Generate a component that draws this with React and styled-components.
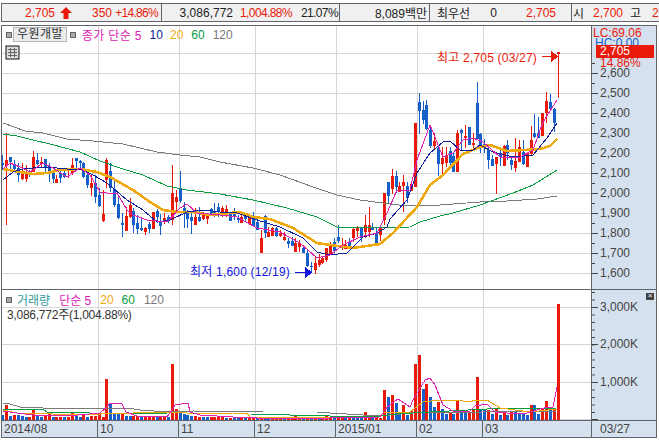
import React from "react";
import styled, { createGlobalStyle } from "styled-components";

const Red = "#ea1a0a";
const Blue = "#1560c8";
const AxisBg = "#d6e1ef";
const Line = "#606468";
const GridLine = "#d6d6d6";

// [red?, wick top, body top, body bottom, wick bottom] in page pixels
const candles = [
  [0,155,163,165,170],[1,133,160,166,225],[0,157,157,162,170],[0,160,164,169,172],[0,163,168,175,182],[1,163,172,179,180],[1,165,174,179,182],[0,170,172,175,177],
  [1,151,157,172,172],[0,153,160,164,165],[1,157,162,164,167],[0,159,159,167,172],[0,163,166,173,182],[0,170,173,179,183],[1,175,179,183,183],[0,170,173,178,183],
  [0,170,173,177,178],[1,168,168,170,178],[1,158,165,173,175],[0,158,158,161,170],[0,160,161,163,170],[0,162,163,177,178],[0,170,175,185,188],[1,175,183,188,196],
  [0,175,183,197,203],[0,188,195,206,207],[1,190,214,221,222],[1,158,160,180,188],[0,163,171,188,192],[0,179,189,205,207],[0,195,204,218,219],[0,213,223,225,237],
  [1,207,216,231,231],[1,198,205,217,218],[0,208,211,225,233],[0,215,223,229,234],[0,218,228,230,231],[1,227,228,232,235],[0,222,224,229,233],[1,212,212,229,229],
  [0,209,211,217,223],[0,214,221,226,235],[1,213,218,222,224],[0,215,217,221,223],[1,165,193,220,225],[1,190,197,202,212],[0,171,189,201,203],[0,202,208,214,228],
  [0,210,213,219,228],[0,213,217,221,234],[1,208,217,225,225],[0,207,217,221,222],[1,212,214,219,220],[1,213,214,219,224],[0,208,209,215,215],[0,203,212,216,217],
  [0,203,207,212,217],[1,206,208,216,217],[1,205,209,213,217],[0,212,213,221,221],[0,208,213,217,220],[0,215,218,220,223],[1,215,217,223,223],[0,213,214,219,221],
  [1,215,218,224,225],[0,212,217,226,226],[0,217,222,230,230],[1,230,238,253,253],[0,215,216,233,238],[1,227,232,237,237],[1,227,228,236,236],[0,227,228,236,237],
  [1,230,233,236,237],[1,232,237,240,241],[0,238,241,244,248],[0,237,241,246,246],[1,238,243,252,252],[1,240,243,247,252],[0,247,248,253,253],[0,250,253,266,267],
  [0,262,266,267,273],[1,256,263,270,274],[1,254,260,265,267],[1,257,258,263,264],[1,248,248,260,262],[1,242,246,254,255],[0,238,242,251,253],[0,225,237,241,243],
  [1,238,245,247,250],[1,240,245,249,249],[0,238,242,247,248],[1,227,229,238,242],[1,226,228,231,237],[0,227,227,238,242],[1,215,225,232,238],[1,207,225,232,237],
  [0,223,228,230,230],[0,227,233,245,245],[1,225,228,235,241],[1,193,193,220,225],[0,182,182,196,203],[1,169,176,189,194],[0,171,176,187,193],[1,182,186,192,192],
  [1,175,182,186,212],[0,182,186,198,203],[1,183,184,191,191],[1,123,123,187,187],[0,93,102,111,134],[0,101,110,120,124],[0,100,105,129,130],[0,127,130,146,148],
  [1,133,141,146,150],[0,147,148,164,176],[1,147,158,164,175],[1,147,155,163,167],[0,147,151,163,167],[0,153,156,172,172],[1,130,133,172,172],[0,129,130,133,150],
  [1,125,136,138,148],[0,127,127,145,145],[1,133,143,145,150],[0,82,103,139,139],[0,133,134,147,153],[0,139,144,147,153],[0,145,150,160,169],[0,155,159,166,166],
  [1,157,157,164,194],[0,150,153,157,166],[1,145,146,166,166],[0,140,145,153,160],[0,157,160,165,170],[1,138,161,168,172],[1,140,147,162,162],[0,140,152,164,165],
  [1,152,153,167,167],[1,126,140,154,155],[0,114,133,137,138],[0,117,133,138,138],[1,113,113,136,136],[1,92,101,113,123],[0,94,102,109,110],[0,108,109,123,132],
  [1,52,52,54,98],
];

// height in pixels, blue bars negative
const volumes = [
  -5,15,-4,5,-5,-4,-3,3,10,-5,-3,4,6,-3,3,3,-3,3,8,-4,-3,5,-3,4,4,7,3,41,-17,-6,-6,6,-4,-4,4,4,-3,3,3,4,-3,4,3,-3,56,11,-8,-6,-5,-4,4,3,-3,-3,3,3,3,
  3,-2,2,-2,-2,2,-2,2,2,-2,2,-2,-2,2,2,3,-2,2,2,4,2,-2,2,-2,2,-2,2,4,3,-2,2,2,-2,2,-2,-2,-2,8,4,-2,2,2,
  30,-23,25,-17,-7,15,-5,9,56,65,-31,36,-23,-13,18,-11,-6,8,-6,20,-8,-8,8,10,43,-11,-10,10,-6,11,-5,7,-5,9,-8,-6,-6,-5,15,-15,-6,11,19,-12,12,116,
];

const candleX = i => Math.round(2.4 + 3.855 * i);

const priceLines = [
  { color: "#7a7a7a", width: 1, pts: "3,123 25,131 43,133 67,139 93,141 123,144 157,152 180,155 200,157 220,162 253,168 280,175 313,187 337,195 360,200 383,203 407,206 440,205 480,202 507,201 537,199 557,196" },
  { color: "#0b9c40", width: 1, pts: "3,134 17,136 33,140 50,144 80,152 100,161 123,169 143,175 167,186 187,190 220,194 253,200 287,208 317,217 337,227 353,228 410,227 420,222 440,216 453,213 480,205 513,193 533,185 557,170" },
  { color: "#f0a90c", width: 2.6, pts: "3,169 20,172 33,174 47,173 60,170 80,169 97,172 110,177 133,190 150,202 163,210 177,212 193,212 210,215 240,212 253,217 270,219 293,228 317,243 337,246 353,248 380,244 393,233 405,220 417,207 430,185 443,175 463,154 480,147 490,145 507,151 540,149 550,146 557,139" },
  { color: "#10209a", width: 1, pts: "3,180 13,172 23,169 33,168 47,167 67,169 80,169 93,175 107,183 127,200 143,210 157,222 170,220 187,212 203,210 220,212 237,213 257,220 280,227 303,238 317,252 330,255 347,253 363,237 377,233 387,227 390,219 407,200 417,173 430,153 443,142 450,141 460,150 473,150 480,145 493,152 513,157 533,155 547,138 557,123" },
  { color: "#e020b4", width: 1, pts: "3,169 10,163 20,167 30,172 43,163 53,168 67,177 80,168 90,175 100,192 107,193 117,193 127,210 133,215 147,220 167,222 180,208 187,204 197,213 220,215 237,217 257,228 280,232 300,243 317,258 330,255 343,245 360,237 377,233 387,213 397,190 410,190 417,160 430,125 443,157 453,153 463,140 473,138 483,142 500,157 520,157 533,150 543,122 557,100" },
];

const volumeLines = [
  { color: "#7a7a7a", pts: "3,403 10,404 20,407 43,408 127,408 140,410 167,412 193,411 263,412 317,412 330,413 380,416 410,413 557,411" },
  { color: "#0b9c40", pts: "3,409 43,409 47,412 87,412 90,413 167,414 250,414 330,416 380,416 397,414 430,412 487,409 557,408" },
  { color: "#f0a90c", pts: "3,410 17,413 50,413 53,414 100,414 107,413 133,413 140,412 173,412 200,414 233,413 247,413 250,417 300,417 330,418 380,417 383,413 410,412 423,402 440,400 458,400 468,402 477,400 487,400 500,408 530,412 557,409" },
  { color: "#e020b4", pts: "3,411 17,413 33,415 67,416 100,413 107,407 110,403 122,404 126,412 137,416 167,417 172,410 175,405 188,403 190,412 200,415 233,417 257,418 330,418 380,417 387,407 398,399 410,407 413,400 425,380 430,378 435,385 443,405 453,411 470,411 475,406 487,404 495,412 507,413 527,413 547,407 553,407 557,387" },
];

const GridV = [98, 179, 255, 336, 417, 483];

const GlobalStyle = createGlobalStyle`
  html, body {
    margin: 0;
    padding: 0;
    background: #fff;
    overflow: hidden;
  }
  body {
    font-family: "Liberation Sans", "Noto Sans CJK KR", sans-serif;
    font-size: 12px;
  }
`;

const Page = styled.div`
  width: 659px;
  height: 440px;
  padding: 3px 0 0 1px;
  box-sizing: border-box;
  overflow: hidden;
`;

const Header = styled.div`
  display: flex;
  width: 670px;
  height: 19px;
  box-sizing: border-box;
  border: 1px solid ${Line};
  background: #f0f0f0;
  margin-bottom: 3px;
`;

const Cell = styled.div`
  display: flex;
  align-items: center;
  flex: 0 0 ${p => p.$w}px;
  box-sizing: border-box;
  overflow: hidden;
  border-right: 1px solid ${Line};
  &:last-child {
    flex: 1;
    border-right: none;
  }
`;

const Val = styled.span`
  flex: 0 0 ${p => p.$w}px;
  margin-left: ${p => p.$ml || 0}px;
  text-align: ${p => p.$left ? "left" : "right"};
  white-space: nowrap;
  color: ${p => p.$c || "#222"};
  letter-spacing: ${p => p.$ls || 0}px;
`;

const UpArrow = styled.svg`
  flex: 0 0 12px;
  width: 12px;
  height: 12px;
  margin-left: 5px;
`;

const Frame = styled.div`
  display: grid;
  grid-template-columns: 590px 64px;
  grid-template-rows: 264px 131px 16px;
  width: 656px;
  height: 413px;
  box-sizing: border-box;
  border: 1px solid ${Line};
`;

const ChartPanel = styled.div`
  position: relative;
  overflow: hidden;
  background: #fff;
  border-right: 1px solid ${Line};
  border-bottom: 1px solid ${Line};
`;

const Plot = styled.svg`
  display: block;
  width: 590px;
  height: 100%;
  shape-rendering: crispEdges;
`;

const Legend = styled.div`
  position: absolute;
  left: 4px;
  top: ${p => p.$top}px;
  display: flex;
  align-items: center;
  height: 15px;
  white-space: nowrap;
`;

const Knob = styled.i`
  display: block;
  width: 4px;
  height: 4px;
  background: #a8a8a8;
  border: 1px solid #666;
  margin-right: ${p => p.$mr || 0}px;
`;

const NameTag = styled.span`
  box-sizing: border-box;
  width: 54px;
  height: 15px;
  line-height: 13px;
  margin: 0 3px 0 1px;
  text-align: center;
  letter-spacing: 0.5px;
  background: #ebebeb;
  border: 1px solid #b8b8b8;
  color: #333;
`;

const Series = styled.span`
  color: ${p => p.$c};
  margin-left: ${p => p.$ml || 0}px;
  letter-spacing: ${p => p.$ls || 0}px;
`;

const GridButton = styled.svg`
  position: absolute;
  left: 3px;
  top: 19px;
  width: 15px;
  height: 15px;
`;

const VolumeNote = styled.div`
  position: absolute;
  left: 5px;
  top: 15px;
  color: #333;
  letter-spacing: -0.25px;
  white-space: nowrap;
`;

const Marker = styled.span`
  position: absolute;
  left: ${p => p.$x}px;
  top: ${p => p.$y}px;
  color: ${p => p.$c};
  letter-spacing: 0.2px;
  white-space: nowrap;
`;

const Axis = styled.div`
  position: relative;
  overflow: hidden;
  background-color: ${AxisBg};
  background-image: ${p => p.$minor ? "linear-gradient(#444 1px, transparent 1px)" : "none"};
  background-size: 3px 7.5px;
  background-position: 0 2px;
  background-repeat: repeat-y;
  color: #444;
  border-bottom: 1px solid ${Line};
  padding-top: ${p => p.$pad || 0}px;
  box-sizing: border-box;
`;

const AxisRow = styled.div`
  position: relative;
  display: flex;
  align-items: center;
  height: ${p => p.$h}px;
  margin-top: ${p => p.$mt || 0}px;
  padding-left: 8px;
  &::before {
    content: "";
    position: absolute;
    left: 0;
    top: 50%;
    width: 6px;
    height: 1px;
    background: #444;
  }
  &::after {
    content: "";
    display: ${p => p.$noMinor ? "none" : "block"};
    position: absolute;
    left: 0;
    top: 0;
    width: 3px;
    height: 1px;
    background: #444;
  }
`;

const PriceFlag = styled.div`
  position: absolute;
  left: 4px;
  right: 2px;
  top: 19px;
  height: 13px;
  line-height: 13px;
  padding-left: 4px;
  background: ${Red};
  color: #fff;
`;

const AxisNote = styled.div`
  position: absolute;
  left: ${p => p.$x}px;
  top: ${p => p.$y}px;
  color: ${p => p.$c};
  white-space: nowrap;
`;

const CloseBox = styled.div`
  position: absolute;
  top: 3px;
  right: 2px;
  width: 8px;
  height: 7px;
  line-height: 6px;
  font-size: 8px;
  text-align: center;
  background: #444;
  color: #fff;
`;

const TimeAxis = styled.div`
  display: flex;
  background: ${AxisBg};
  color: #444;
  border-right: 1px solid ${Line};
`;

const TimeCell = styled.div`
  flex: 0 0 ${p => p.$w}px;
  box-sizing: border-box;
  padding-left: 2px;
  line-height: 16px;
  border-right: 1px solid ${Line};
  &:last-child {
    border-right: none;
    flex: 1;
  }
`;

const TimeEnd = styled.div`
  background: ${AxisBg};
  color: #444;
  line-height: 16px;
  padding-left: 8px;
`;

const PriceChart = () => (
  <Plot viewBox="2 26 590 263">
    {[53, 73, 93, 113, 133, 153, 173, 193, 213, 233, 253, 273].map(y => (
      <line key={y} x1="2" x2="592" y1={y + 0.5} y2={y + 0.5} stroke={GridLine} />
    ))}
    {GridV.map(x => (
      <line key={x} x1={x + 0.5} x2={x + 0.5} y1="26" y2="290" stroke={GridLine} />
    ))}
    {candles.map(([up, wt, bt, bb, wb], i) => {
      const x = candleX(i);
      const c = up ? Red : Blue;
      return (
        <g key={i} fill={c}>
          <rect x={x} y={wt} width="1" height={wb - wt} />
          <rect x={x - 1} y={bt} width="3" height={Math.max(bb - bt, 1)} />
        </g>
      );
    })}
    {priceLines.map(l => (
      <polyline key={l.color} points={l.pts} fill="none" stroke={l.color} strokeWidth={l.width} />
    ))}
    <g fill={Red} stroke={Red}>
      <line x1="542" x2="552" y1="56.5" y2="56.5" />
      <polygon points="551,51 557,56.5 551,62" />
    </g>
    <g fill="#1414e0" stroke="#1414e0">
      <line x1="295" x2="305" y1="272.5" y2="272.5" />
      <polygon points="305,267 311,272.5 305,278" />
    </g>
  </Plot>
);

const VolumeChart = () => (
  <Plot viewBox="2 290 590 130">
    {[307, 344, 382, 419].map(y => (
      <line key={y} x1="2" x2="592" y1={y + 0.5} y2={y + 0.5} stroke={GridLine} />
    ))}
    {GridV.map(x => (
      <line key={x} x1={x + 0.5} x2={x + 0.5} y1="290" y2="420" stroke={GridLine} />
    ))}
    {volumes.map((v, i) => (
      <rect key={i} x={candleX(i) - 1} y={420 - Math.abs(v)} width="3" height={Math.abs(v)} fill={v > 0 ? Red : Blue} />
    ))}
    {volumeLines.map(l => (
      <polyline key={l.color} points={l.pts} fill="none" stroke={l.color} strokeWidth="1" />
    ))}
  </Plot>
);

export default function App() {
  return (
    <Page>
      <GlobalStyle />
      <Header>
        <Cell $w={160}>
          <Val $w={53} $c={Red}>2,705</Val>
          <UpArrow viewBox="0 0 12 12"><polygon points="6,0 12,6 8.5,6 8.5,12 3.5,12 3.5,6 0,6" fill={Red} /></UpArrow>
          <Val $w={40} $c={Red}>350</Val>
          <Val $w={46} $c={Red} $ls={-0.7}>+14.86%</Val>
        </Cell>
        <Cell $w={178}>
          <Val $w={71}>3,086,772</Val>
          <Val $w={59} $c={Red} $ls={-0.6}>1,004.88%</Val>
          <Val $w={46} $ls={-0.6}>21.07%</Val>
        </Cell>
        <Cell $w={90}>
          <Val $w={87}>8,089백만</Val>
        </Cell>
        <Cell $w={142}>
          <Val $w={36} $ml={7} $left>최우선</Val>
          <Val $w={24}>0</Val>
          <Val $w={59} $c={Red}>2,705</Val>
        </Cell>
        <Cell>
          <Val $w={12} $ml={1} $left>시</Val>
          <Val $w={38} $c={Red}>2,700</Val>
          <Val $w={12} $ml={7} $left>고</Val>
          <Val $w={30} $ml={10} $c={Red} $left>2,705</Val>
        </Cell>
      </Header>
      <Frame>
        <ChartPanel>
          <PriceChart />
          <Legend $top={1}>
            <Knob />
            <NameTag>우원개발</NameTag>
            <Knob $mr={6} />
            <Series $c="#e020b4" $ls={0.3}>종가 단순 5</Series>
            <Series $c="#10209a" $ml={8}>10</Series>
            <Series $c="#f0a90c" $ml={7}>20</Series>
            <Series $c="#0b9c40" $ml={8}>60</Series>
            <Series $c="#777" $ml={8}>120</Series>
          </Legend>
          <GridButton viewBox="0 0 15 15">
            <rect x="1" y="1" width="13" height="13" fill="#ddd" stroke="#111" />
            <path d="M3 4.5H12M3 7.5H12M3 10.5H12M5.5 3V12M9.5 3V12" stroke="#666" fill="none" />
          </GridButton>
          <Marker $x={435} $y={22} $c={Red}>최고 2,705 (03/27)</Marker>
          <Marker $x={188} $y={236} $c="#1414e0">최저 1,600 (12/19)</Marker>
        </ChartPanel>
        <Axis $pad={37}>
          {["2,600", "2,500", "2,400", "2,300", "2,200", "2,100", "2,000", "1,900", "1,800", "1,700", "1,600"].map(p => (
            <AxisRow key={p} $h={20}>{p}</AxisRow>
          ))}
          <AxisNote $x={3} $y={10} $c="#1560c8">HC:0.00</AxisNote>
          <AxisNote $x={1} $y={0} $c={Red}>LC:69.06</AxisNote>
          <PriceFlag>2,705</PriceFlag>
          <AxisNote $x={8} $y={30} $c={Red}>14.86%</AxisNote>
        </Axis>
        <ChartPanel>
          <VolumeChart />
          <Legend $top={2}>
            <Knob $mr={5} />
            <Series $c="#2f9c9c">거래량</Series>
            <Series $c="#e020b4" $ml={9}>단순 5</Series>
            <Series $c="#f0a90c" $ml={9}>20</Series>
            <Series $c="#0b9c40" $ml={8}>60</Series>
            <Series $c="#777" $ml={9}>120</Series>
          </Legend>
          <VolumeNote>3,086,772주(1,004.88%)</VolumeNote>
        </ChartPanel>
        <Axis $minor>
          <AxisRow $h={37.5} $mt={-2} $noMinor>3,000K</AxisRow>
          <AxisRow $h={37.5} $noMinor>2,000K</AxisRow>
          <AxisRow $h={37.5} $noMinor>1,000K</AxisRow>
          <AxisRow $h={37.5} $noMinor />
          <CloseBox>×</CloseBox>
        </Axis>
        <TimeAxis>
          <TimeCell $w={96}>2014/08</TimeCell>
          <TimeCell $w={81}>10</TimeCell>
          <TimeCell $w={76}>11</TimeCell>
          <TimeCell $w={81}>12</TimeCell>
          <TimeCell $w={81}>2015/01</TimeCell>
          <TimeCell $w={66}>02</TimeCell>
          <TimeCell>03</TimeCell>
        </TimeAxis>
        <TimeEnd>03/27</TimeEnd>
      </Frame>
    </Page>
  );
}
